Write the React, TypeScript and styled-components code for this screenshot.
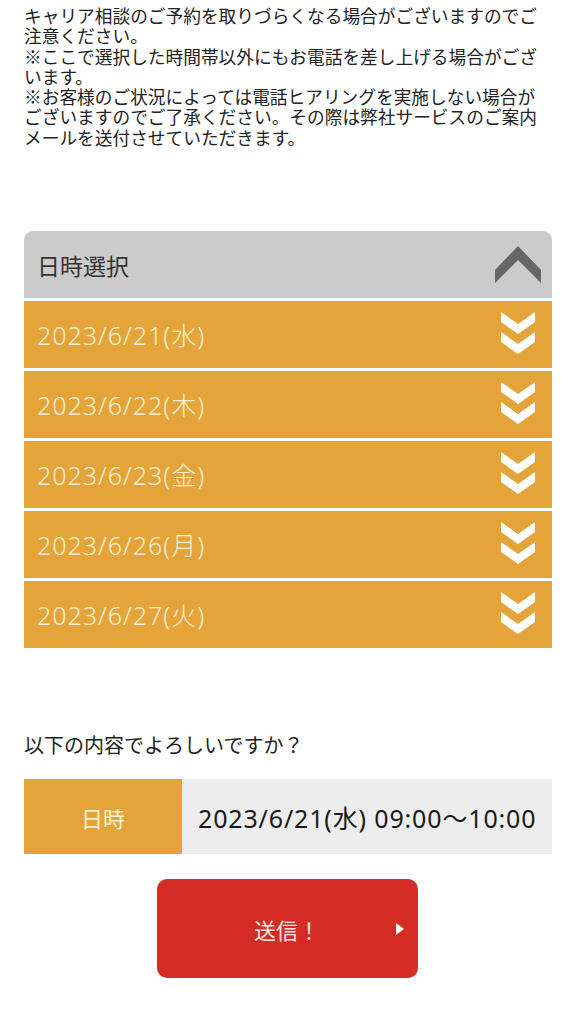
import React from "react";
import styled, { createGlobalStyle } from "styled-components";

const Global = createGlobalStyle`
  html, body { margin: 0; padding: 0; background: #fff; }
  body { font-family: "Noto Sans CJK JP", "Noto Sans", sans-serif; color: #222; }
`;

const Page = styled.div`
  width: 576px;
  padding: 0 24px;
  box-sizing: border-box;
`;

const Notice = styled.p`
  margin: 0;
  padding-top: 5px;
  font-size: 17.7px;
  line-height: 20.3px;
  color: #222;
  letter-spacing: 0;
`;

const Accordion = styled.div`
  margin-top: 84px;
  width: 528px;
`;

const Header = styled.div`
  height: 67px;
  background: #cbcbcb;
  border-radius: 9px 9px 0 0;
  display: flex;
  align-items: center;
  justify-content: space-between;
  padding: 0 11px 0 13px;
`;

const HeaderTitle = styled.span`
  font-size: 23px;
  color: #333;
`;

const DateRow = styled.div`
  height: 67px;
  margin-top: 3px;
  background: #e5a439;
  display: flex;
  align-items: center;
  justify-content: space-between;
  padding: 0 17px 2px 13px;
  box-sizing: border-box;
`;

const DateText = styled.span`
  font-family: "Noto Sans", "Noto Sans CJK JP", sans-serif;
  font-size: 25px;
  font-weight: 300;
  color: #fdf0d6;
  letter-spacing: 1px;
`;

const Question = styled.p`
  margin: 83px 0 0;
  font-size: 20px;
  line-height: 28px;
  color: #222;
`;

const Summary = styled.div`
  margin-top: 20px;
  display: grid;
  grid-template-columns: 158px 370px;
  height: 75px;
`;

const SummaryLabel = styled.div`
  background: #e5a439;
  color: #fdf0d6;
  font-size: 22px;
  display: flex;
  align-items: center;
  justify-content: center;
`;

const SummaryValue = styled.div`
  background: #ededed;
  color: #1a1a1a;
  font-family: "Noto Sans", "Noto Sans CJK JP", sans-serif;
  font-size: 25px;
  letter-spacing: 0.85px;
  display: flex;
  align-items: center;
  padding-left: 16px;
  white-space: nowrap;
`;

const ButtonWrap = styled.div`
  display: flex;
  justify-content: center;
  margin-top: 25px;
  padding-right: 2px;
`;

const SubmitButton = styled.button`
  position: relative;
  width: 261px;
  height: 99px;
  border: none;
  border-radius: 10px;
  background: #d42b25;
  color: #fde9e6;
  font-family: "Noto Sans CJK JP", sans-serif;
  font-size: 22px;
  display: flex;
  align-items: center;
  justify-content: center;
  padding: 0;
  cursor: pointer;
`;

const Arrow = styled.span`
  position: absolute;
  right: 14px;
  top: 50%;
  margin-top: -6px;
  width: 0;
  height: 0;
  border-top: 6px solid transparent;
  border-bottom: 6px solid transparent;
  border-left: 8px solid #fff;
`;

const UpChevron = () => (
  <svg width="46" height="38" viewBox="0 0 46 38">
    <polygon points="23,0 46,24 46,37 23,14 0,37 0,24" fill="#666" />
  </svg>
);

const DoubleChevron = () => (
  <svg width="34" height="44" viewBox="0 0 34 44">
    <polygon points="0,0 17,12 34,0 34,10 17,22 0,10" fill="#fff" />
    <polygon points="0,20 17,32 34,20 34,30 17,42 0,30" fill="#fff" />
  </svg>
);

const dates = [
  "2023/6/21(水)",
  "2023/6/22(木)",
  "2023/6/23(金)",
  "2023/6/26(月)",
  "2023/6/27(火)",
];

export default function App() {
  return (
    <>
      <Global />
      <Page>
        <Notice>
          キャリア相談のご予約を取りづらくなる場合がございますのでご注意ください。
          <br />
          ※ここで選択した時間帯以外にもお電話を差し上げる場合がございます。
          <br />
          ※お客様のご状況によっては電話ヒアリングを実施しない場合がございますのでご了承ください。その際は弊社サービスのご案内メールを送付させていただきます。
        </Notice>
        <Accordion>
          <Header>
            <HeaderTitle>日時選択</HeaderTitle>
            <UpChevron />
          </Header>
          {dates.map((d) => (
            <DateRow key={d}>
              <DateText>{d}</DateText>
              <DoubleChevron />
            </DateRow>
          ))}
        </Accordion>
        <Question>以下の内容でよろしいですか？</Question>
        <Summary>
          <SummaryLabel>日時</SummaryLabel>
          <SummaryValue>2023/6/21(水) 09:00〜10:00</SummaryValue>
        </Summary>
        <ButtonWrap>
          <SubmitButton>
            送信！
            <Arrow />
          </SubmitButton>
        </ButtonWrap>
      </Page>
    </>
  );
}
